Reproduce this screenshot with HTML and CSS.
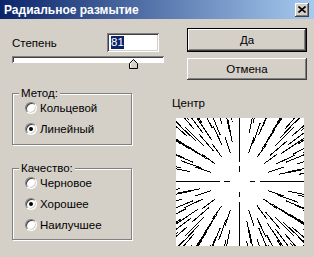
FILE: index.html
```html
<!DOCTYPE html>
<html>
<head>
<title>Радиальное размытие</title>
<link rel="stylesheet" href="styles.css">
</head>
<body>
<div class="dialog">
  <div class="titlebar">
    <span class="title">Радиальное размытие</span>
    <div class="close">
      <svg width="8" height="7" viewBox="0 0 8 7"><path d="M0.5 0.5L7.5 6.5M7.5 0.5L0.5 6.5" stroke="#000" stroke-width="1.6"/></svg>
    </div>
  </div>
  <div class="content">
    <div class="left">
      <div class="amount-row">
        <span class="label">Степень</span>
        <div class="field"><span class="sel">81</span></div>
      </div>
      <div class="slider">
        <div class="track"></div>
        <svg class="thumb" width="9" height="10" viewBox="0 0 9 10">
          <polygon points="4.5,0.5 8.5,4.5 8.5,9.5 0.5,9.5 0.5,4.5" fill="#d4d0c8" stroke="#000"/>
          <polyline points="1.5,8.5 1.5,4.9 4.5,1.9" fill="none" stroke="#fff"/>
        </svg>
      </div>
      <div class="group method">
        <div class="legend">Метод:</div>
        <div class="radio"><span class="radio-dot"></span>Кольцевой</div>
        <div class="radio checked"><span class="radio-dot"></span>Линейный</div>
      </div>
      <div class="group quality">
        <div class="legend">Качество:</div>
        <div class="radio"><span class="radio-dot"></span>Черновое</div>
        <div class="radio checked"><span class="radio-dot"></span>Хорошее</div>
        <div class="radio"><span class="radio-dot"></span>Наилучшее</div>
      </div>
    </div>
    <div class="right">
      <div class="btn btn-default">Да</div>
      <div class="btn">Отмена</div>
      <div class="center-label">Центр</div>
      <svg class="preview js-preview" width="128" height="128"></svg>
    </div>
  </div>
</div>
<script>
  // radial streaks for the blur centre preview
  const preview = document.querySelector('.js-preview');
  const c = 63.5;
  let lines = '';
  for (let r = 10; r <= 100; r += 10) {
    const n = 4 * Math.max(1, Math.round(2 * Math.PI * r / 40));
    const shift = (r / 10) % 2 ? 0 : 0.5;
    for (let i = 0; i < n; i++) {
      const onAxis = i % (n / 4) === 0;
      if (!onAxis && r < 30) continue;
      const a = (i + (onAxis ? 0 : shift * 0.6)) * 2 * Math.PI / n;
      const len = r * 0.55;
      const x1 = c + Math.cos(a) * r;
      const y1 = c + Math.sin(a) * r;
      const x2 = c + Math.cos(a) * (r + len);
      const y2 = c + Math.sin(a) * (r + len);
      lines += `<line x1="${x1}" y1="${y1}" x2="${x2}" y2="${y2}"/>`;
    }
  }
  preview.innerHTML = `<g stroke="#000" stroke-width="1" shape-rendering="crispEdges">${lines}</g>`;
</script>
</body>
</html>
```

FILE: styles.css
```css
body {
  margin: 0;
  background-color: #d4d0c8;
  font-family: "Liberation Sans", Arial, sans-serif;
  font-size: 11.5px;
  color: #000;
}
.dialog {
  width: 314px;
  height: 257px;
  overflow: hidden;
  background-color: #d4d0c8;
}
.titlebar {
  height: 19px;
  display: flex;
  align-items: center;
  padding-left: 4px;
  background: linear-gradient(to right, #0a246a, #a6caf0);
}
.title {
  flex: 1;
  color: #fff;
  font-weight: bold;
  font-size: 12px;
}
.close {
  width: 14px;
  height: 14px;
  margin-right: 5px;
  box-sizing: border-box;
  display: flex;
  align-items: center;
  justify-content: center;
  background-color: #d4d0c8;
  box-shadow: inset -1px -1px #404040, inset 1px 1px #fff, inset -2px -2px #808080;
}
.content {
  display: grid;
  grid-template-columns: 152px 1fr;
  column-gap: 8px;
  padding-left: 12px;
}
.left {
  padding-top: 14px;
}
.right {
  padding-top: 9px;
}
.amount-row {
  display: flex;
  align-items: center;
  height: 19px;
}
.field {
  width: 52px;
  height: 19px;
  margin-left: auto;
  margin-right: 5px;
  box-sizing: border-box;
  padding-left: 4px;
  display: flex;
  align-items: center;
  background-color: #fff;
  box-shadow: inset 1px 1px #808080, inset -1px -1px #fff, inset 2px 2px #404040, inset -2px -2px #d4d0c8;
}
.sel {
  background-color: #0a246a;
  color: #fff;
  line-height: 13px;
}
.slider {
  position: relative;
  height: 13px;
  margin-top: 4px;
}
.track {
  height: 7px;
  margin-top: 2px;
  box-sizing: border-box;
  background-color: #fff;
  box-shadow: inset 1px 1px #808080, inset -1px -1px #fff, inset 2px 2px #404040;
}
.thumb {
  position: absolute;
  left: 117px;
  top: 3px;
}
.group {
  width: 120px;
  box-sizing: border-box;
  display: flex;
  flex-direction: column;
  border: 1px solid #808080;
  box-shadow: inset 1px 1px #fff, 1px 1px #fff;
}
.method {
  margin-top: 24px;
  padding-bottom: 5px;
}
.quality {
  margin-top: 23px;
  padding-bottom: 4px;
}
.legend {
  align-self: flex-start;
  margin: -7px 0 -3px 6px;
  padding: 0 2px;
  line-height: 13px;
  background-color: #d4d0c8;
}
.radio {
  display: flex;
  align-items: center;
  gap: 3px;
  height: 21px;
  padding-left: 12px;
}
.radio-dot {
  position: relative;
  width: 12px;
  height: 12px;
  box-sizing: border-box;
  border-radius: 50%;
  border: 1px solid;
  border-color: #808080 #fff #fff #808080;
  background-color: #fff;
  box-shadow: inset 1px 1px #404040, inset -1px -1px #d4d0c8;
}
.checked .radio-dot::after {
  content: "";
  position: absolute;
  left: 3px;
  top: 3px;
  width: 4px;
  height: 4px;
  border-radius: 50%;
  background-color: #000;
}
.btn {
  width: 120px;
  height: 22px;
  margin-left: 15px;
  box-sizing: border-box;
  display: flex;
  align-items: center;
  justify-content: center;
  background-color: #d4d0c8;
  box-shadow: inset -1px -1px #404040, inset 1px 1px #fff, inset -2px -2px #808080;
}
.btn-default {
  height: 24px;
  border: 1px solid #000;
}
.btn + .btn {
  margin-top: 6px;
}
.center-label {
  margin-top: 16px;
  line-height: 14px;
}
.preview {
  display: block;
  margin: 8px 0 0 4px;
  background-color: #fff;
}
```
